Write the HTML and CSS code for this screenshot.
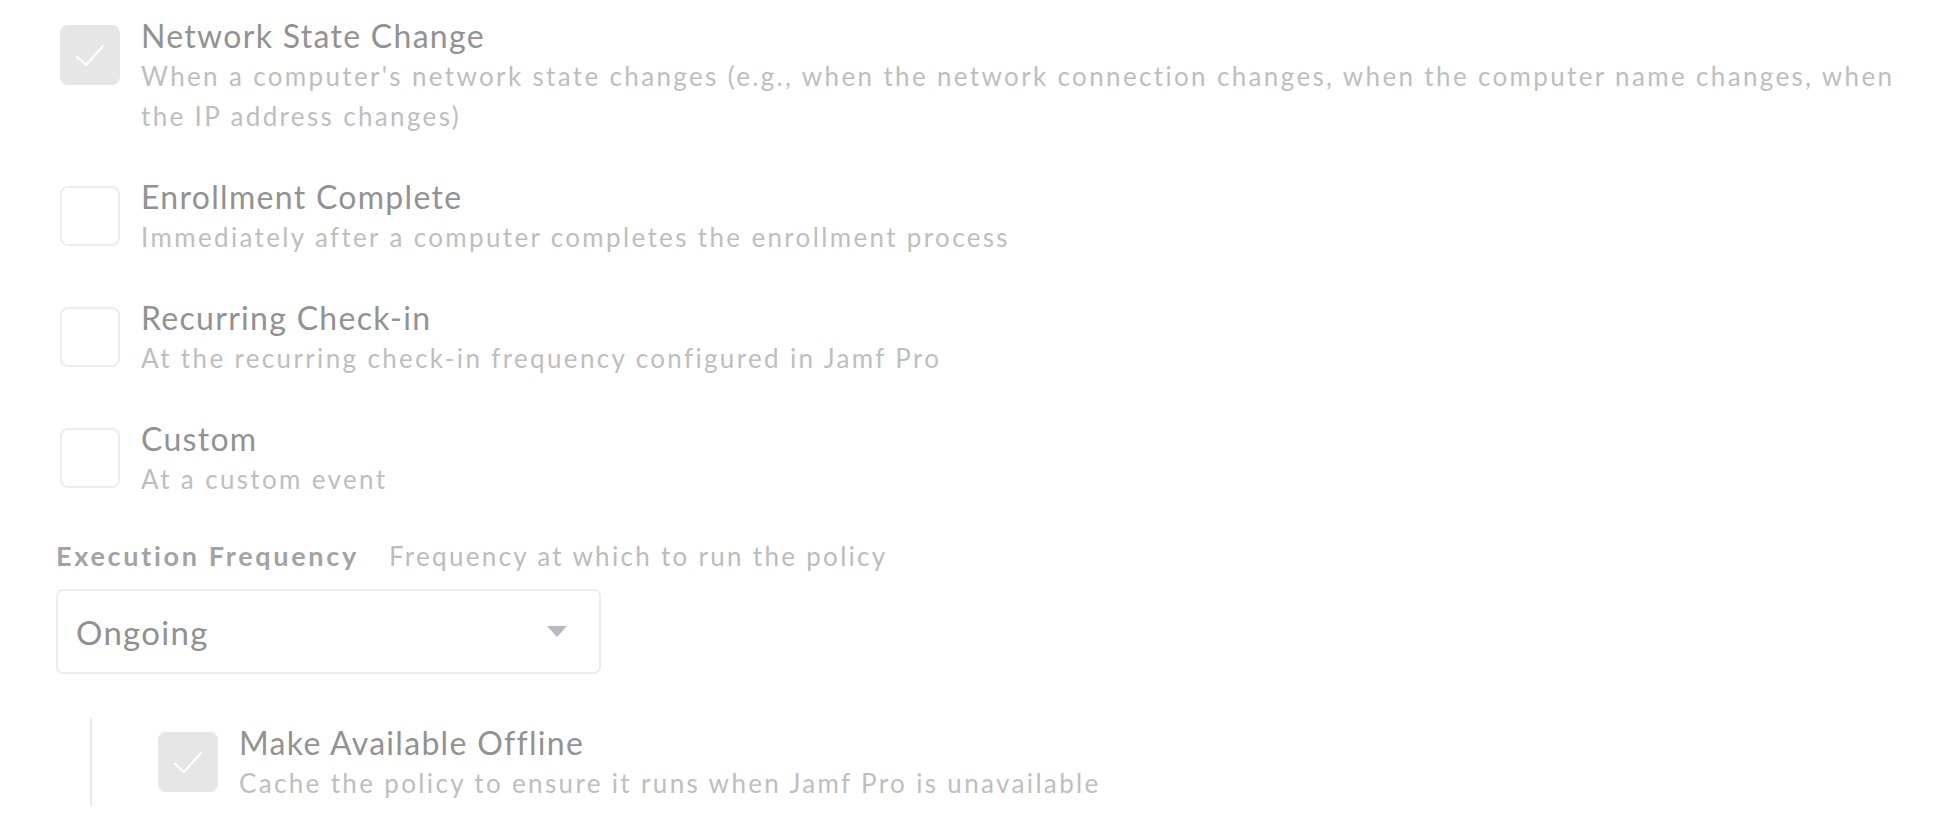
FILE: index.html
```html
<!DOCTYPE html>
<html lang="en">
<head>
<meta charset="utf-8">
<title>Policy Triggers</title>
<link rel="stylesheet" href="styles.css">
</head>
<body>
<div class="page">
  <div class="options">
    <div class="option">
      <span class="checkbox is-checked"><svg viewBox="0 0 60 60" width="60" height="60"><path d="M17 32 L26 40 L43 21" fill="none" stroke="#fff" stroke-width="2.2" stroke-linecap="round" stroke-linejoin="round"/></svg></span>
      <div class="option-text">
        <div class="option-title">Network State Change</div>
        <div class="option-desc">When a computer's network state changes (e.g., when the network connection changes, when the computer name changes, when the IP address changes)</div>
      </div>
    </div>
    <div class="option">
      <span class="checkbox"></span>
      <div class="option-text">
        <div class="option-title">Enrollment Complete</div>
        <div class="option-desc">Immediately after a computer completes the enrollment process</div>
      </div>
    </div>
    <div class="option">
      <span class="checkbox"></span>
      <div class="option-text">
        <div class="option-title">Recurring Check-in</div>
        <div class="option-desc">At the recurring check-in frequency configured in Jamf Pro</div>
      </div>
    </div>
    <div class="option">
      <span class="checkbox"></span>
      <div class="option-text">
        <div class="option-title">Custom</div>
        <div class="option-desc">At a custom event</div>
      </div>
    </div>
  </div>

  <div class="field">
    <div class="field-head">
      <span class="field-label">Execution Frequency</span>
      <span class="field-hint">Frequency at which to run the policy</span>
    </div>
    <div class="select">
      <span class="select-value">Ongoing</span>
      <span class="caret"></span>
    </div>
  </div>

  <div class="nested">
    <div class="option">
      <span class="checkbox is-checked"><svg viewBox="0 0 60 60" width="60" height="60"><path d="M17 32 L26 40 L43 21" fill="none" stroke="#fff" stroke-width="2.2" stroke-linecap="round" stroke-linejoin="round"/></svg></span>
      <div class="option-text">
        <div class="option-title">Make Available Offline</div>
        <div class="option-desc">Cache the policy to ensure it runs when Jamf Pro is unavailable</div>
      </div>
    </div>
  </div>
</div>
</body>
</html>
```

FILE: styles.css
```css
* { box-sizing: border-box; }

html, body {
  margin: 0;
  padding: 0;
  background: #ffffff;
}

body {
  font-family: Lato, "Open Sans", "Liberation Sans", sans-serif;
  color: #8e8e8e;
}

.page {
  padding: 16px 26px 0 56px;
}

.options {
  display: flex;
  flex-direction: column;
  gap: 41px;
}

.option {
  display: flex;
  align-items: flex-start;
  gap: 21px;
  padding-left: 4px;
}

.checkbox {
  flex: 0 0 60px;
  width: 60px;
  height: 60px;
  margin-top: 9px;
  border: 2px solid #ececec;
  border-radius: 8px;
  background: #fff;
  display: flex;
}

.checkbox.is-checked {
  border-color: #e6e6e6;
  background: #e6e6e6;
}

.checkbox svg {
  margin: -2px;
  display: block;
}

.option-text {
  flex: 1 1 auto;
  min-width: 0;
}

.option-title {
  font-size: 32px;
  line-height: 40px;
  letter-spacing: 1.3px;
  color: #929292;
}

.option-desc {
  font-size: 26px;
  line-height: 40px;
  letter-spacing: 2.35px;
  color: #bebebe;
}

.field {
  margin-top: 41px;
}

.field-head {
  display: flex;
  align-items: baseline;
  gap: 30px;
  line-height: 32px;
}

.field-label {
  font-size: 27px;
  font-weight: 700;
  letter-spacing: 2.7px;
  color: #a3a3a3;
}

.field-hint {
  font-size: 26px;
  letter-spacing: 2.3px;
  color: #bcbcbc;
}

.select {
  margin-top: 17px;
  width: 545px;
  height: 85px;
  border: 2px solid #ececec;
  border-radius: 7px;
  display: flex;
  align-items: center;
  justify-content: space-between;
  padding: 0 32px 0 18px;
}

.select-value {
  font-size: 33px;
  letter-spacing: 1.3px;
  color: #919191;
}

.caret {
  width: 0;
  height: 0;
  border-left: 10px solid transparent;
  border-right: 10px solid transparent;
  border-top: 11px solid #b7bac1;
}

.nested {
  margin: 44px 0 0 34px;
  border-left: 2px solid #e6e8ec;
  padding: 5px 0 2px 66px;
}

.nested .option {
  padding-left: 0;
}
```
